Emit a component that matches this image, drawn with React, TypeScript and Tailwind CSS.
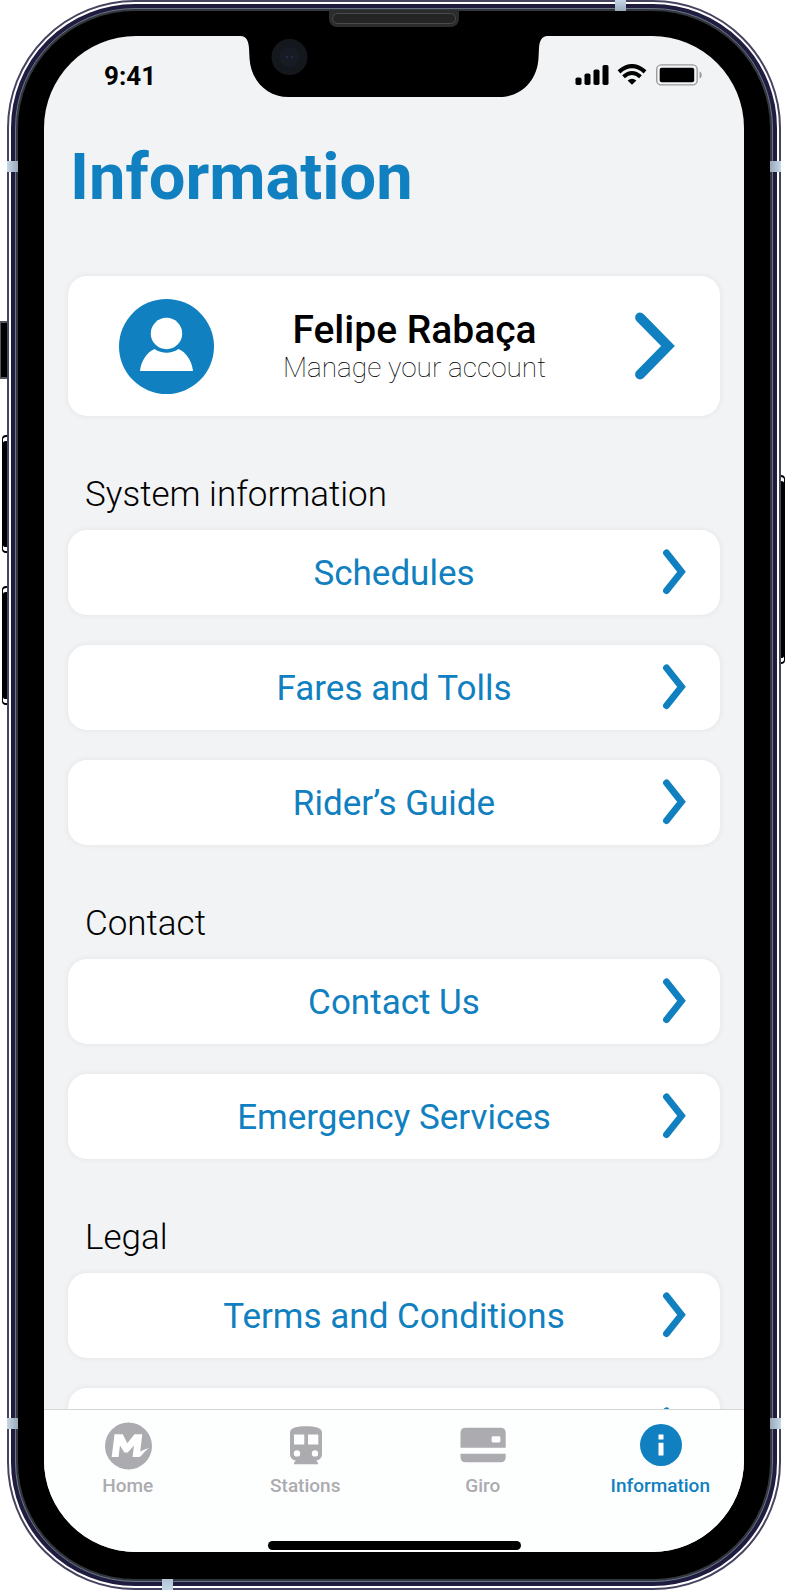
import React from "react";

const BLUE = "#1080c0";

function Notch() {
  return (
    <svg className="absolute left-1/2 top-0 h-[62px] w-[307px] -translate-x-1/2" viewBox="0 0 307 62" aria-hidden="true">
      <path d="M0 0C6 0 8 5 8.500 12L9 22C10 44 26 61 48 61H259C281 61 297 44 298 22L298.500 12C299 5 301 0 307 0Z" fill="#000" />
      <circle cx="49" cy="21" r="18" fill="#14181d" />
      <circle cx="49" cy="21" r="10" fill="#171b24" />
      <path d="M46 20l1 2M51 20l1 2" stroke="#2b2d5c" strokeWidth="1.500" />
    </svg>
  );
}

function StatusIcons() {
  return (
    <svg className="h-[22px] w-[128px]" viewBox="0 0 128 22" role="img" aria-label="Signal, Wi-Fi and battery">
      <rect x="0.500" y="13.500" width="6" height="7.500" rx="1.800" />
      <rect x="9.500" y="9.500" width="6" height="11.500" rx="1.800" />
      <rect x="18.500" y="5.500" width="6" height="15.500" rx="1.800" />
      <rect x="27.500" y="1" width="6" height="20" rx="1.800" />
      <path d="M44 7.800Q57 -3.500 70 7.800" fill="none" stroke="#000" strokeWidth="4.200" />
      <path d="M48.500 12.800Q57 5.200 65.500 12.800" fill="none" stroke="#000" strokeWidth="4" />
      <path d="M52.600 16.400Q57 13 61.400 16.400L57 20.800Z" />
      <rect x="81.700" y="0.900" width="40.500" height="20" rx="4.500" fill="none" stroke="#9b9b9d" strokeWidth="1.400" />
      <rect x="84.700" y="3.700" width="34.500" height="14.500" rx="2" />
      <path d="M124.500 7.500C127.500 8.500 127.500 13.500 124.500 14.500Z" fill="#9b9b9d" />
    </svg>
  );
}

function Avatar() {
  return (
    <svg className="size-[95px] shrink-0" viewBox="0 0 95 95" aria-hidden="true">
      <circle cx="47.500" cy="47.500" r="47.500" fill={BLUE} />
      <circle cx="47.500" cy="34.500" r="15.700" fill="#fff" />
      <path d="M21 72C22 62 28 53 35.500 50C43 55 52 55 59.500 50C67 53 73 62 74 72Z" fill="#fff" />
    </svg>
  );
}

function LargeChevron() {
  return (
    <svg className="h-[68px] w-[40px] shrink-0" viewBox="0 0 40 68" aria-hidden="true">
      <path d="M5 5.500L33 34L5 62.500" fill="none" stroke={BLUE} strokeWidth="9.800" strokeLinecap="round" />
    </svg>
  );
}

function Chevron() {
  return (
    <svg className="col-start-3 h-[48px] w-[24px] shrink-0" viewBox="0 0 24 48" aria-hidden="true">
      <path d="M3.500 3.900L18.500 22.800L3.500 41.700" fill="none" stroke={BLUE} strokeWidth="6.800" strokeLinecap="round" />
    </svg>
  );
}

const sections = [
  { title: "System information", rows: ["Schedules", "Fares and Tolls", "Rider’s Guide"] },
  { title: "Contact", rows: ["Contact Us", "Emergency Services"] },
  { title: "Legal", rows: ["Terms and Conditions", ""] },
];

function Row({ label }: { label: string }) {
  return (
    <a
      href="#"
      className="grid h-[85px] shrink-0 grid-cols-[24px_1fr_24px] items-center rounded-[19px] bg-white px-[33px] text-center text-[35px] leading-10 text-[#1080c0] shadow-[0_0_6px_rgba(0,0,0,0.07)]"
    >
      {label && <span className="col-start-2 whitespace-nowrap pt-[2px]">{label}</span>}
      <Chevron />
    </a>
  );
}

function HomeIcon() {
  return (
    <svg className="size-12" viewBox="-1 0 48 48" fill="#acabb0" aria-hidden="true">
      <circle cx="23.500" cy="24" r="23.500" />
      <path d="M9.500 12.300H17.800L22.300 21.300L29.500 12.300H37.300L35.200 29.500C38 28.500 41 26.500 44.500 26.300C40 28 38.500 32.500 34.500 35H27.500L29 23.500L22.700 30.500H19.300L15 23.500L13.500 35H6.700Z" fill="#fff" />
    </svg>
  );
}

function TrainIcon() {
  return (
    <svg className="size-12" viewBox="-1 0 48 48" fill="#acabb0" aria-hidden="true">
      <path fillRule="evenodd" d="M8 11C8 5.500 15 4.300 24 4.300S40 5.500 40 11V32C40 36 37 38.500 34 38.500L36 40.800V42.300H12V40.800L14 38.500C11 38.500 8 36 8 32ZM12 12.500V22.500H22.300V12.500ZM26 12.500V22.500H36.300V12.500ZM15 28.200A3.200 3.200 0 1 0 15 34.600A3.200 3.200 0 1 0 15 28.200ZM33 28.200A3.200 3.200 0 1 0 33 34.600A3.200 3.200 0 1 0 33 28.200Z" />
    </svg>
  );
}

function CardIcon() {
  return (
    <svg className="size-12" viewBox="0 0 48 48" fill="#acabb0" aria-hidden="true">
      <path fillRule="evenodd" d="M1.500 25.700V11Q1.500 5.700 6.800 5.700H41.500Q46.700 5.700 46.700 11V25.700ZM34 14.200Q32.600 14.200 32.600 15.500V19Q32.600 20.400 34 20.400H40Q41.400 20.400 41.400 19V15.500Q41.400 14.200 40 14.200Z" />
      <path d="M1.500 31.700H46.700V35Q46.700 40.300 41.500 40.300H6.800Q1.500 40.300 1.500 35Z" />
    </svg>
  );
}

function InfoIcon() {
  return (
    <svg className="size-12" viewBox="-1 0 48 48" aria-hidden="true">
      <circle cx="24" cy="23" r="21" fill={BLUE} />
      <path d="M21.500 12.500H26.500V17.500H21.500ZM21.500 20.800H26.500V33.500H21.500Z" fill="#fff" />
    </svg>
  );
}

const tabs = [
  { label: "Home", icon: <HomeIcon />, active: false },
  { label: "Stations", icon: <TrainIcon />, active: false },
  { label: "Giro", icon: <CardIcon />, active: false },
  { label: "Information", icon: <InfoIcon />, active: true },
];

function Hardware() {
  return (
    <div aria-hidden="true">
      <div className="absolute left-0 top-[321px] h-[58px] w-[7px] border-y-2 border-l border-[#54555f] bg-black" />
      <div className="absolute left-[2px] top-[435px] h-[118px] w-[5px] rounded-l-sm border-y-2 border-l border-black bg-black shadow-[inset_0_4px_0_#fff,inset_0_-4px_0_#fff]" />
      <div className="absolute left-[2px] top-[586px] h-[119px] w-[5px] rounded-l-sm border-y-2 border-l border-black bg-black shadow-[inset_0_4px_0_#fff,inset_0_-4px_0_#fff]" />
      <div className="absolute right-px top-[475px] h-[189px] w-[4px] rounded-r-sm border-y-2 border-r border-black bg-black shadow-[inset_0_4px_0_#fff,inset_0_-4px_0_#fff]" />
      <div className="absolute left-[7px] top-[161px] h-[11px] w-[11px] bg-gradient-to-r from-[#c5d8e8] to-[#99a9ba]" />
      <div className="absolute bottom-[161px] left-[7px] h-[11px] w-[11px] bg-gradient-to-r from-[#c5d8e8] to-[#99a9ba]" />
      <div className="absolute right-[5px] top-[161px] h-[11px] w-[11px] bg-gradient-to-l from-[#c5d8e8] to-[#99a9ba]" />
      <div className="absolute bottom-[161px] right-[5px] h-[11px] w-[11px] bg-gradient-to-l from-[#c5d8e8] to-[#99a9ba]" />
      <div className="absolute right-[160px] top-0 h-[11px] w-[11px] bg-gradient-to-b from-[#c5d8e8] to-[#99a9ba]" />
      <div className="absolute bottom-0 left-[162px] h-[11px] w-[11px] bg-gradient-to-t from-[#c5d8e8] to-[#b0c4d6]" />
      <div className="absolute inset-x-0 top-[10px] flex justify-center pl-[2px]">
        <div className="h-[17px] w-[130px] rounded-b-lg bg-[#2b2c2c] p-[3px]">
          <div className="h-full rounded-md border border-[#4b4c4e] bg-[#242424]" />
        </div>
      </div>
    </div>
  );
}

export default function App() {
  return (
    <div className="relative h-screen overflow-hidden bg-white pl-[7px] pr-[5px] font-[Roboto,sans-serif] text-black">
      <div className="h-full rounded-[128px] border-2 border-[#45435f] bg-white p-[2px]">
        <div className="h-full rounded-[124px] border-4 border-[#1f1c40] bg-[#1f1c40]">
          <div className="h-full rounded-[120px] border border-[#6b7788] bg-[#33373d] p-[2px]">
            <div className="h-full rounded-[117px] bg-black px-[26px] pb-[27px] pt-[25px]">
              <div className="relative flex h-full flex-col overflow-hidden rounded-[92px] bg-[#f2f3f5]">
                <Notch />
                <header className="flex h-[78px] shrink-0 items-center justify-between pl-[60px] pr-[41px]">
                  <time className="pt-[2px] text-[26px] font-bold leading-8">9:41</time>
                  <StatusIcons />
                </header>
                <main className="flex min-h-0 flex-1 flex-col overflow-hidden px-6">
                  <h1 className="mt-[25px] shrink-0 pl-[2px] text-[65px] font-bold leading-[76px] text-[#1080c0]">Information</h1>
                  <a href="#" className="mt-[61px] flex h-[140px] shrink-0 items-center rounded-[19px] bg-white pl-[51px] pr-[45px] shadow-[0_0_6px_rgba(0,0,0,0.07)]">
                    <Avatar />
                    <span className="flex flex-1 flex-col items-center pr-5 pt-[4px]">
                      <span className="text-[39px] font-medium leading-10">Felipe Rabaça</span>
                      <span className="text-[28px] font-thin leading-9">Manage your account</span>
                    </span>
                    <LargeChevron />
                  </a>
                  {sections.map((section) => (
                    <section key={section.title} className="flex shrink-0 flex-col">
                      <h2 className="h-[114px] pl-[17px] pt-[59px] text-[35px] font-light leading-10">{section.title}</h2>
                      <div className="flex flex-col gap-[30px]">
                        {section.rows.map((row) => (
                          <Row key={row} label={row} />
                        ))}
                      </div>
                    </section>
                  ))}
                </main>
                <nav className="flex h-[143px] shrink-0 flex-col items-center border-t border-[#d6d6d8] bg-[#fdfefe] pt-[12px]">
                  <div className="-mx-[5px] grid grid-cols-4 self-stretch">
                    {tabs.map((tab) => (
                      <button
                        key={tab.label}
                        type="button"
                        aria-current={tab.active ? "page" : undefined}
                        className={`flex flex-col items-center gap-1 text-[19px] font-medium leading-6 ${tab.active ? "text-[#1080c0]" : "text-[#acabb0]"}`}
                      >
                        {tab.icon}
                        {tab.label}
                      </button>
                    ))}
                  </div>
                  <div className="mb-[2px] mt-auto h-[9px] w-[253px] rounded-full bg-black" />
                </nav>
              </div>
            </div>
          </div>
        </div>
      </div>
      <Hardware />
    </div>
  );
}
